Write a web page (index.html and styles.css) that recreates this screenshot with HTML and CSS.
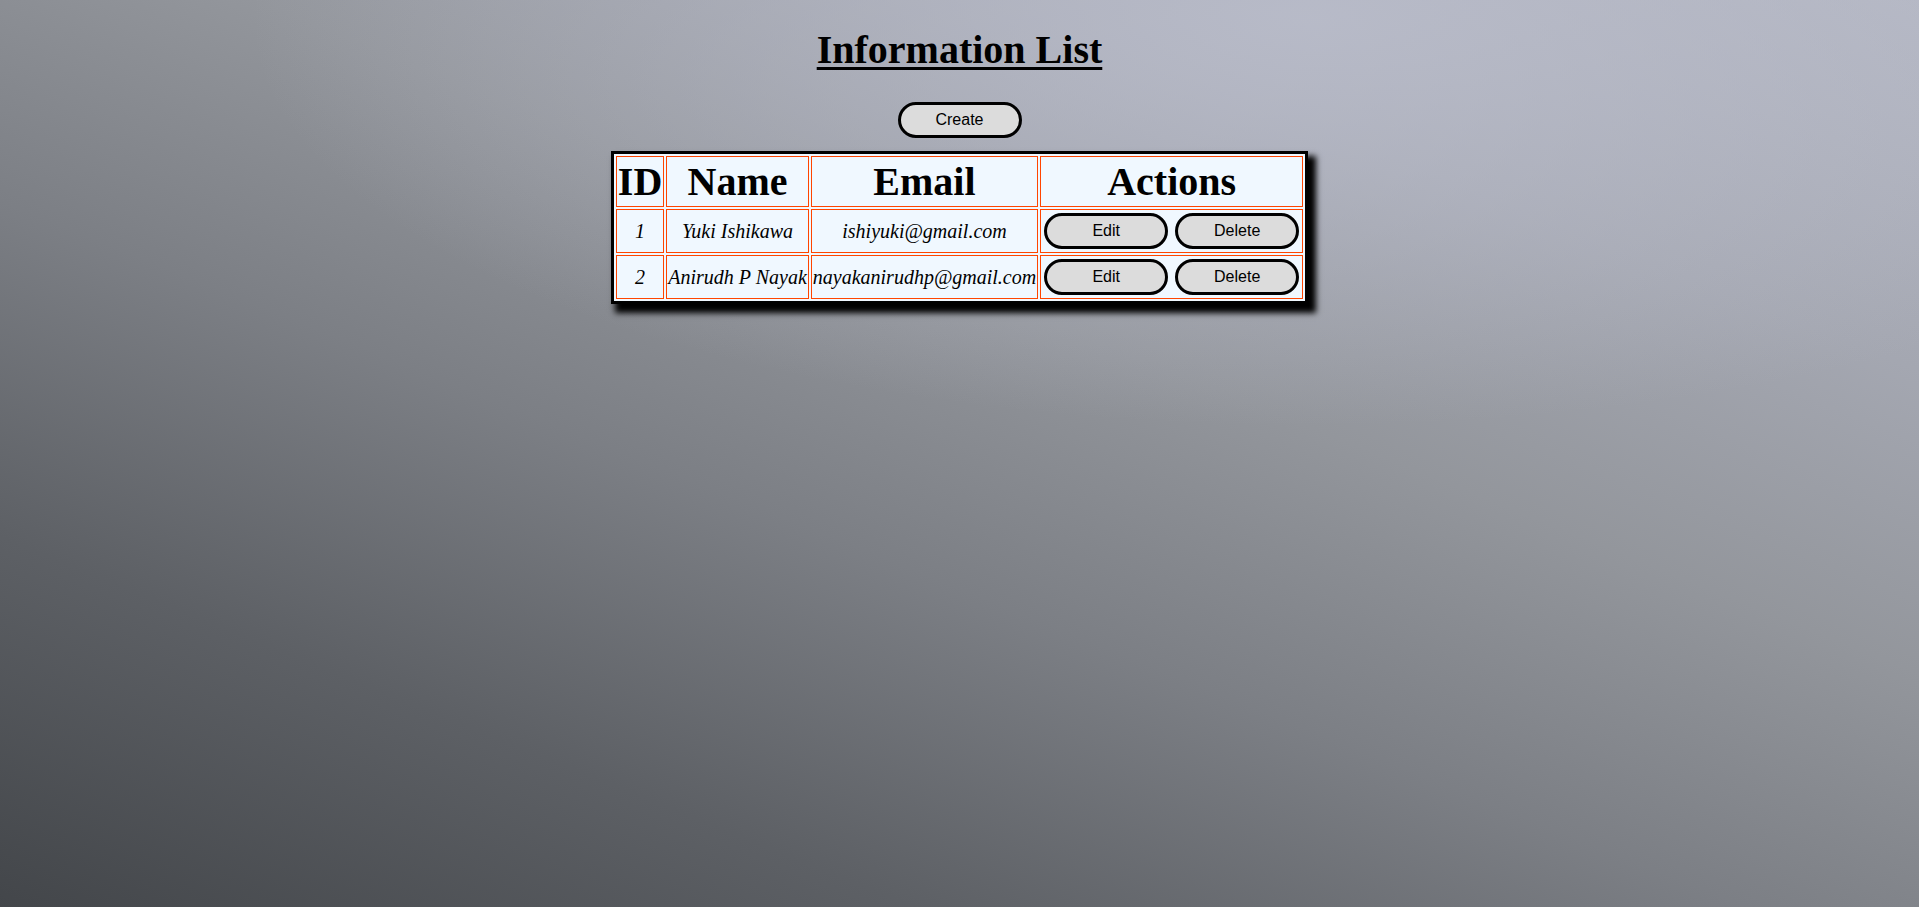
FILE: index.html
```html
<!DOCTYPE html>
<html lang="en">
<head>
<meta charset="utf-8">
<title>Information List</title>
<link rel="stylesheet" href="styles.css">
</head>
<body>
<main class="page">
  <h1 class="title">Information List</h1>
  <div class="create-bar">
    <button class="btn" type="button">Create</button>
  </div>
  <table class="info-table">
    <thead>
      <tr>
        <th>ID</th>
        <th>Name</th>
        <th>Email</th>
        <th>Actions</th>
      </tr>
    </thead>
    <tbody>
      <tr>
        <td>1</td>
        <td>Yuki Ishikawa</td>
        <td>ishiyuki@gmail.com</td>
        <td><div class="btns"><button class="btn" type="button">Edit</button><button class="btn" type="button">Delete</button></div></td>
      </tr>
      <tr>
        <td>2</td>
        <td>Anirudh P Nayak</td>
        <td>nayakanirudhp@gmail.com</td>
        <td><div class="btns"><button class="btn" type="button">Edit</button><button class="btn" type="button">Delete</button></div></td>
      </tr>
    </tbody>
  </table>
</main>
</body>
</html>
```
FILE: styles.css
```css
html, body {
  margin: 0;
  height: 100%;
}
body {
  font-family: "Liberation Serif", "Times New Roman", serif;
  color: #000;
  background:
    radial-gradient(ellipse 55% 45% at 68% 2%, rgba(186, 189, 203, 0.85), rgba(186, 189, 203, 0) 100%),
    linear-gradient(22deg, #43464a 0%, #5d6065 22%, #7c7f85 42%, #93969c 60%, #a4a7b1 78%, #b3b6c2 100%);
  min-height: 907px;
}
.page {
  display: flex;
  flex-direction: column;
  align-items: center;
  padding-top: 27px;
}
.title {
  margin: 0;
  font-size: 40px;
  line-height: 46px;
  font-weight: bold;
  text-decoration: underline;
  text-decoration-thickness: 3px;
  text-underline-offset: 4px;
}
.create-bar {
  margin-top: 29px;
  display: flex;
  justify-content: center;
}
.btn {
  box-sizing: border-box;
  width: 124px;
  height: 36px;
  border: 3px solid #000;
  border-radius: 18px;
  background: #dcdcdc;
  font-family: "Liberation Sans", Arial, sans-serif;
  font-size: 16px;
  color: #000;
  padding: 0;
  cursor: pointer;
}
.info-table {
  margin-top: 13px;
  border: 3px solid #000;
  border-spacing: 2px;
  background: #f0f8ff;
  box-shadow: 6px 7px 6px 2px #000;
}
.info-table th,
.info-table td {
  border: 1px solid #ff4500;
  padding: 1px;
  text-align: center;
  vertical-align: middle;
  background: #f0f8ff;
}
.info-table th {
  font-size: 40px;
  line-height: 47px;
  font-weight: bold;
}
.info-table td {
  font-size: 20px;
  font-style: italic;
  line-height: 23px;
}
.btns {
  display: flex;
  gap: 7px;
  margin: 2px;
}
```
